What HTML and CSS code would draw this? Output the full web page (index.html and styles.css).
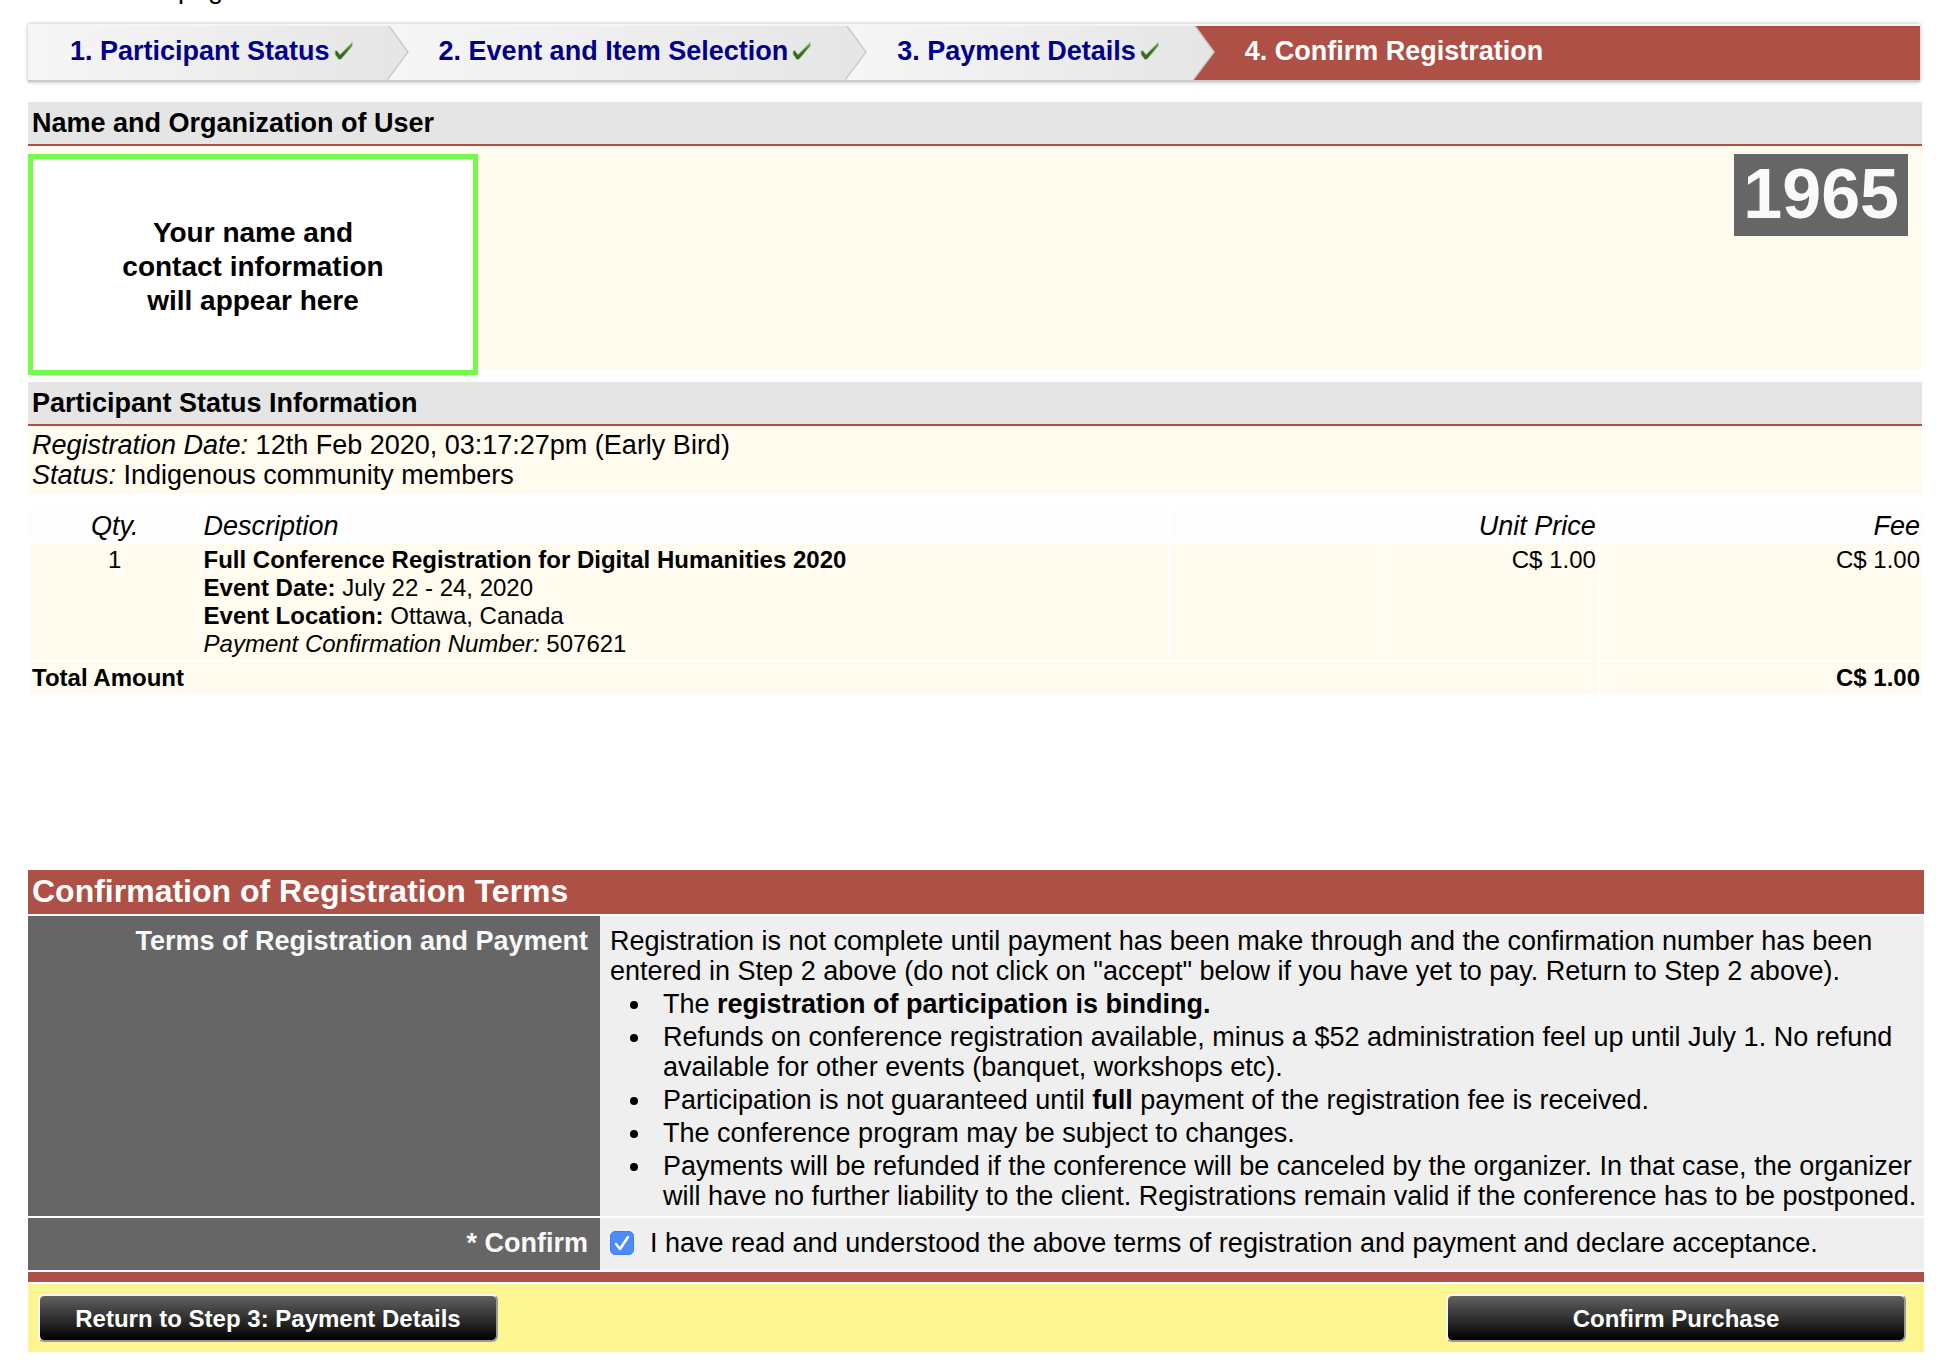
FILE: index.html
```html
<!DOCTYPE html>
<html lang="en">
<head>
<meta charset="utf-8">
<title>Confirm Registration</title>
<link rel="stylesheet" href="styles.css">
</head>
<body>
<svg class="defs" width="0" height="0" aria-hidden="true">
  <defs>
    <linearGradient id="tick-fill" x1="0" y1="1" x2="1" y2="0">
      <stop offset="0" stop-color="#35602a"/>
      <stop offset="0.5" stop-color="#3c6a2c"/>
      <stop offset="1" stop-color="#6fa654"/>
    </linearGradient>
    <symbol id="tick" viewBox="0 0 20 20">
      <path d="M1 9.500L3 9.500L6 13.500L18.500 1V5L7 18.500H4.500L1 13.500Z" fill="url(#tick-fill)" stroke="#b5d7a3" stroke-width="1" stroke-linejoin="round"/>
    </symbol>
    <symbol id="chevron" viewBox="0 0 22 54">
      <path d="M0 0H2L21 26L0 54Z" fill="#e6e6e6"/>
      <path d="M2 0L21 26L0 54" fill="none" stroke="#cacaca" stroke-width="1.500"/>
    </symbol>
  </defs>
</svg>
<p class="intro">page</p>
<main class="page">
  <nav class="steps" aria-label="Registration steps">
    <ol class="steps-list">
      <li class="step"><a href="#status">1. Participant Status</a><svg class="tick"><use href="#tick"/></svg><svg class="chevron"><use href="#chevron"/></svg></li>
      <li class="step"><a href="#items">2. Event and Item Selection</a><svg class="tick"><use href="#tick"/></svg><svg class="chevron"><use href="#chevron"/></svg></li>
      <li class="step"><a href="#payment">3. Payment Details</a><svg class="tick"><use href="#tick"/></svg><svg class="chevron"><use href="#chevron"/></svg></li>
      <li class="step step-current" aria-current="step">4. Confirm Registration</li>
    </ol>
  </nav>

  <section class="section">
    <h2 class="section-title">Name and Organization of User</h2>
    <div class="user">
      <div class="user-card">Your name and<br>contact information<br>will appear here</div>
      <div class="user-number">1965</div>
    </div>
  </section>

  <section class="section" id="status">
    <h2 class="section-title">Participant Status Information</h2>
    <div class="status">
      <div><em>Registration Date:</em> 12th Feb 2020, 03:17:27pm (Early Bird)</div>
      <div><em>Status:</em> Indigenous community members</div>
    </div>
  </section>

  <table class="items" id="items">
    <colgroup><col class="col-qty"><col><col class="col-narrow"><col class="col-narrow"><col class="col-fee"></colgroup>
    <thead>
      <tr><th class="center">Qty.</th><th>Description</th><th></th><th class="right">Unit Price</th><th class="right">Fee</th></tr>
    </thead>
    <tbody>
      <tr>
        <td class="center">1</td>
        <td><strong>Full Conference Registration for Digital Humanities 2020</strong><br><strong>Event Date:</strong> July 22 - 24, 2020<br><strong>Event Location:</strong> Ottawa, Canada<br><em>Payment Confirmation Number:</em> 507621</td>
        <td></td>
        <td class="right">C$ 1.00</td>
        <td class="right">C$ 1.00</td>
      </tr>
      <tr class="total"><td colspan="4">Total Amount</td><td class="right">C$ 1.00</td></tr>
    </tbody>
  </table>

  <form class="terms" id="payment">
    <h2 class="terms-title">Confirmation of Registration Terms</h2>
    <div class="terms-row">
      <div class="terms-label">Terms of Registration and Payment</div>
      <div class="terms-text">
        <p>Registration is not complete until payment has been make through and the confirmation number has been entered in Step 2 above (do not click on "accept" below if you have yet to pay. Return to Step 2 above).</p>
        <ul>
          <li>The <strong>registration of participation is binding.</strong></li>
          <li>Refunds on conference registration available, minus a $52 administration feel up until July 1. No refund available for other events (banquet, workshops etc).</li>
          <li>Participation is not guaranteed until <strong>full</strong> payment of the registration fee is received.</li>
          <li>The conference program may be subject to changes.</li>
          <li>Payments will be refunded if the conference will be canceled by the organizer. In that case, the organizer will have no further liability to the client. Registrations remain valid if the conference has to be postponed.</li>
        </ul>
      </div>
    </div>
    <div class="terms-row confirm-row">
      <div class="terms-label">* Confirm</div>
      <div class="terms-text accept">
        <span class="check">
          <input type="checkbox" id="accept" checked>
          <svg viewBox="0 0 24 24"><path d="M6 13L10 18L18 6" fill="none" stroke="#fff" stroke-width="2.500" stroke-linecap="round" stroke-linejoin="round"/></svg>
        </span>
        <label for="accept">I have read and understood the above terms of registration and payment and declare acceptance.</label>
      </div>
    </div>
    <div class="rule"></div>
    <div class="actions">
      <button type="button" class="button">Return to Step 3: Payment Details</button>
      <button type="submit" class="button">Confirm Purchase</button>
    </div>
  </form>
</main>
</body>
</html>
```
FILE: styles.css
```css
* { box-sizing: border-box; }

body {
  margin: 0;
  background: #fff;
  color: #000;
  font-family: "Liberation Sans", Arial, Helvetica, sans-serif;
  font-size: 27px;
  line-height: 30px;
}

h2, p, ul, ol { margin: 0; padding: 0; }

.defs { display: block; }

.intro {
  display: flex;
  align-items: flex-end;
  height: 4px;
  padding-left: 178px;
  overflow: hidden;
}

.page { padding: 20px 12px 14px 28px; }

/* Step bar */
.steps {
  margin: 0 4px 20px 0;
  border-top: 2px solid #f5f5f5;
  border-bottom: 2px solid #cacaca;
  box-shadow: 0 0 4px rgba(0, 0, 0, 0.3);
}

.steps-list { display: flex; list-style: none; }

.step {
  position: relative;
  display: flex;
  align-items: center;
  gap: 4px;
  height: 54px;
  padding: 0 33px 4px 52px;
  background: linear-gradient(to right, #f6f6f6, #e6e6e6);
  font-weight: bold;
  white-space: nowrap;
}

.step:first-child { padding-left: 42px; }
.step a { color: #00008b; text-decoration: none; }
.step-current { flex: 1; background: #ae5046; color: #fff; }
.tick { width: 20px; height: 20px; }

.chevron {
  position: absolute;
  z-index: 1;
  top: 0;
  left: 100%;
  width: 22px;
  height: 54px;
}

/* Sections */
.section { margin: 0 2px 12px 0; }

.section-title {
  padding: 6px 4px;
  border-bottom: 2px solid #ae5046;
  background: #e5e5e5;
  font-size: 27px;
}

.user {
  display: flex;
  align-items: flex-start;
  justify-content: space-between;
  height: 224px;
  padding: 8px 14px 0 0;
  background: #fffbee;
}

.user-card {
  display: grid;
  place-content: center;
  width: 450px;
  height: 221px;
  padding-top: 4px;
  border: 5px solid #75f94c;
  background: #fff;
  font-size: 28px;
  font-weight: bold;
  line-height: 34px;
  text-align: center;
}

.user-number {
  padding: 0 9px 2px;
  background: #666;
  color: #f9f9f9;
  font-size: 70px;
  font-weight: bold;
  line-height: 80px;
}

.status { padding: 4px; background: #fffbee; }

/* Items */
.items {
  width: 100%;
  margin-top: 14px;
  border-spacing: 2px;
  table-layout: fixed;
  font-size: 24px;
  line-height: 28px;
}

.col-qty { width: 9%; }
.col-narrow { width: 11.3%; }
.col-fee { width: 17.1%; }

.items th, .items td {
  padding: 2px;
  text-align: left;
  vertical-align: top;
}

.items th {
  background: #fdfdfd;
  font-size: 27px;
  font-style: italic;
  font-weight: normal;
}

.items td { background: #fffbee; }
.items .center { text-align: center; }
.items .right { text-align: right; }
.items .total td { font-weight: bold; }

/* Terms */
.terms {
  display: grid;
  gap: 2px;
  margin-top: 174px;
}

.terms-title {
  padding: 3px 4px 5px;
  background: #ae5046;
  color: #fff;
  font-size: 32px;
  line-height: 36px;
}

.terms-row {
  display: grid;
  grid-template-columns: 572px 1fr;
}

.terms-label {
  padding: 10px 12px 5px;
  background: #666;
  color: #f9f9f9;
  font-weight: bold;
  text-align: right;
}

.terms-text { padding: 10px 0 5px 10px; background: #efefef; }
.terms-text li { margin-left: 43px; padding: 3px 0 0 10px; }
.confirm-row > div { padding-top: 10px; padding-bottom: 12px; }
.accept { display: flex; align-items: center; gap: 16px; }

.check { display: grid; width: 24px; height: 24px; }
.check > * { grid-area: 1 / 1; }

.check input {
  appearance: none;
  width: 24px;
  height: 24px;
  margin: 0;
  border: 1px solid #4080f0;
  border-radius: 5px;
  background: #4d8bf8;
}

.check svg { z-index: 1; pointer-events: none; }
.check input:not(:checked) + svg { visibility: hidden; }

.rule { height: 10px; background: #ae5046; }

.actions {
  display: flex;
  justify-content: space-between;
  padding: 10px 18px 10px 10px;
  background: #fdf492;
}

.button {
  width: 460px;
  height: 48px;
  padding: 2px 0 0;
  border: 2px solid;
  border-color: #f5f5f5 #999 #999 #f5f5f5;
  border-radius: 6px;
  background: linear-gradient(#616161, #000) padding-box;
  color: #fff;
  font: bold 24px "Liberation Sans", Arial, sans-serif;
}
```
